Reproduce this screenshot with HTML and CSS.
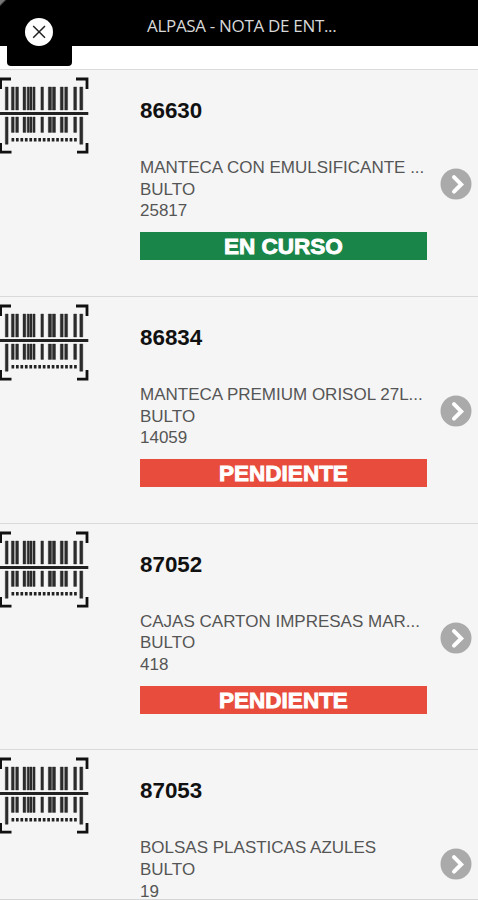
FILE: index.html
```html
<!DOCTYPE html>
<html lang="es">
<head>
    <meta charset="UTF-8">
    <meta name="viewport" content="width=device-width, initial-scale=1.0">
    <title>ALPASA - Nota de entrega</title>
    <link rel="stylesheet" href="styles.css">
</head>
<body>
    <svg class="sprite" width="0" height="0">
        <symbol id="barcode" viewBox="0 0 89 77">
            <g fill="none" stroke="#111" stroke-width="2.8">
                <path d="M.6 12V2H11M76 2H87V12M.6 66V75.2H11.5M77 75.2H87V66"/>
            </g>
            <g fill="#2b2b2b" stroke="#2b2b2b" stroke-width=".4">
                <path d="M5.3 10h2.8v23h-2.8zM11.4 10h2.8v23h-2.8zM15.7 10h2.8v23h-2.8zM23 10h2.8v23H23zM27.2 10h2.2v23h-2.2zM30 10h2.1v23H30zM33 10h2.1v23H33zM40.9 10h2.6v23h-2.6zM48.3 10h3.2v23h-3.2zM52.4 10h3.1v23h-3.1zM60.3 10h2.9v23h-2.9zM64.7 10h2.9v23h-2.9zM73.7 10h2.9v23h-2.9zM79.8 10h3v23h-3z"/>
                <path d="M5.3 40h2.8v27.3h-2.8zM11.4 40h2.8v15.4h-2.8zM15.7 40h2.8v15.4h-2.8zM23 40h2.8v15.4H23zM27.2 40h2.2v15.4h-2.2zM30 40h2.1v15.4H30zM33 40h2.1v15.4H33zM40.9 40h2.6v15.4h-2.6zM48.3 40h3.2v15.4h-3.2zM52.4 40h3.1v15.4h-3.1zM60.3 40h2.9v15.4h-2.9zM64.7 40h2.9v15.4h-2.9zM73.7 40h2.9v15.4h-2.9zM79.8 40h3v27.3h-3z"/>
            </g>
            <path d="M0 36.4H88.3" stroke="#222" stroke-width="3"/>
            <path d="M11.5 62.8H77" stroke="#222" stroke-width="3.4" stroke-dasharray="2.7 1.77"/>
        </symbol>
        <symbol id="arrow" viewBox="0 0 32 32">
            <circle cx="16" cy="16" r="15.5" fill="#aaa"/>
            <path d="M14 9.2L21.2 16.4L14 23.6" fill="none" stroke="#fff" stroke-width="4" stroke-linecap="round"/>
        </symbol>
    </svg>

    <header class="header">
        <div class="close-tab">
            <svg class="close-btn" viewBox="0 0 28 28">
                <circle cx="14" cy="14" r="14" fill="#fff"/>
                <path d="M8.2 8L20 19.8M20 8L8.2 19.8" stroke="#222" stroke-width="1.5"/>
            </svg>
        </div>
        <h1 class="title">ALPASA - NOTA DE ENT...</h1>
    </header>

    <ul class="list">
        <li class="item">
            <svg class="barcode"><use href="#barcode"/></svg>
            <div class="info">
                <h2>86630</h2>
                <p>MANTECA CON EMULSIFICANTE ...</p>
                <p>BULTO</p>
                <p class="num">25817</p>
                <div class="status en-curso">EN CURSO</div>
            </div>
            <svg class="arrow"><use href="#arrow"/></svg>
        </li>
        <li class="item">
            <svg class="barcode"><use href="#barcode"/></svg>
            <div class="info">
                <h2>86834</h2>
                <p>MANTECA PREMIUM ORISOL 27L...</p>
                <p>BULTO</p>
                <p class="num">14059</p>
                <div class="status pendiente">PENDIENTE</div>
            </div>
            <svg class="arrow"><use href="#arrow"/></svg>
        </li>
        <li class="item">
            <svg class="barcode"><use href="#barcode"/></svg>
            <div class="info">
                <h2>87052</h2>
                <p>CAJAS CARTON IMPRESAS MAR...</p>
                <p>BULTO</p>
                <p class="num">418</p>
                <div class="status pendiente">PENDIENTE</div>
            </div>
            <svg class="arrow"><use href="#arrow"/></svg>
        </li>
        <li class="item last">
            <svg class="barcode"><use href="#barcode"/></svg>
            <div class="info">
                <h2>87053</h2>
                <p>BOLSAS PLASTICAS AZULES</p>
                <p>BULTO</p>
                <p class="num">19</p>
            </div>
            <svg class="arrow"><use href="#arrow"/></svg>
        </li>
    </ul>
</body>
</html>
```
FILE: styles.css
```css
* {
    box-sizing: border-box;
}
body {
    margin: 0;
    height: 900px;
    overflow: hidden;
    background: #fff;
    font-family: "Liberation Sans", Arial, sans-serif;
    display: flex;
    flex-direction: column;
}
.sprite {
    position: absolute;
}
.header {
    display: flex;
    height: 46px;
    margin-bottom: 23px;
    padding-left: 7px;
    background: linear-gradient(135deg, #777 3px, #000 5px);
    flex-shrink: 0;
}
.close-tab {
    width: 65px;
    height: 66px;
    padding: 18px 0 0 18px;
    background: #000;
    border-radius: 0 0 4px 4px;
    flex-shrink: 0;
}
.close-btn {
    display: block;
    width: 28px;
    height: 28px;
}
.title {
    margin: 0 0 0 75px;
    font-family: "Open Sans", "Noto Sans", sans-serif;
    font-size: 17px;
    font-weight: 400;
    line-height: 52px;
    letter-spacing: -0.32px;
    color: #d8d8d8;
    white-space: nowrap;
}
.list {
    margin: 0;
    padding: 0;
    list-style: none;
}
.item {
    display: flex;
    height: 226.8px;
    border-top: 1px solid #dadada;
    background: #f5f5f5;
}
.last {
    height: 150.6px;
    border-bottom: 1px solid #d5d5d5;
}
.barcode {
    width: 89px;
    height: 77px;
    margin-top: 7px;
    flex-shrink: 0;
}
.info {
    width: 287px;
    margin-left: 51px;
    flex-shrink: 0;
}
h2 {
    margin: 27px 0 32px;
    font-size: 22.4px;
    line-height: 28px;
    color: #111;
}
p {
    margin: 0;
    font-size: 17px;
    line-height: 21.7px;
    color: #555;
    white-space: nowrap;
}
.status {
    height: 28px;
    margin-top: 10px;
    font-size: 22.5px;
    font-weight: bold;
    line-height: 29px;
    text-align: center;
    color: #fff;
    -webkit-text-stroke: 0.9px #fff;
}
.en-curso {
    background: #1a8548;
}
.pendiente {
    background: #e74c3c;
}
.arrow {
    width: 32px;
    height: 32px;
    margin: 98px 0 0 12.5px;
    flex-shrink: 0;
}
```
